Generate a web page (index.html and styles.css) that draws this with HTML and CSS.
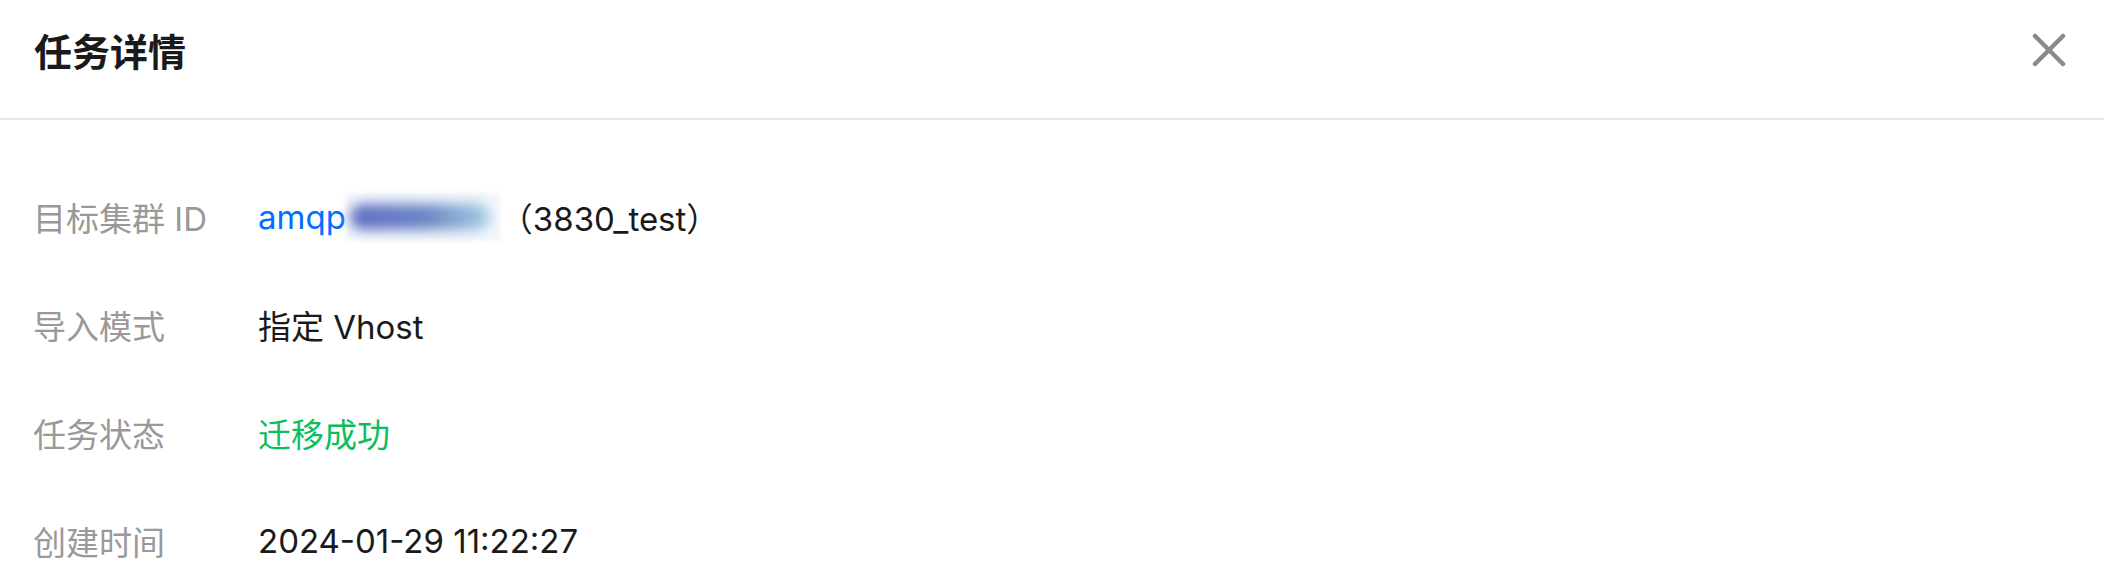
FILE: index.html
```html
<!DOCTYPE html>
<html lang="zh-CN">
<head>
  <meta charset="UTF-8" />
  <meta name="viewport" content="width=device-width, initial-scale=1.0" />
  <title>任务详情</title>
  <link rel="stylesheet" href="styles.css">
</head>
<body>
  <div class="dialog">
    <header class="dialog-header">
      <h2 class="dialog-title">任务详情</h2>
      <button class="dialog-close" aria-label="关闭">
        <svg width="34" height="34" viewBox="0 0 34 34">
          <path d="M3 3 L31 31 M31 3 L3 31" stroke="#8a8a8a" stroke-width="4.5" stroke-linecap="round" fill="none" />
        </svg>
      </button>
    </header>
    <main class="dialog-body">
      <dl class="info">
        <dt>目标集群 ID</dt>
        <dd>
          <a class="link" href="#">amqp</a><span class="mask"><span class="mask-bar"></span></span><span>（3830_test）</span>
        </dd>
        <dt>导入模式</dt>
        <dd>指定 Vhost</dd>
        <dt>任务状态</dt>
        <dd class="success">迁移成功</dd>
        <dt>创建时间</dt>
        <dd>2024-01-29 11:22:27</dd>
      </dl>
    </main>
  </div>
</body>
</html>
```

FILE: styles.css
```css
html, body {
  margin: 0;
  height: 100%;
  overflow: hidden;
}
body {
  font-family: Inter, "Noto Sans CJK SC", sans-serif;
  font-size: 33px;
  color: #1a1a1a;
  background: #fff;
}
.dialog {
  height: 100%;
}
.dialog-header {
  display: flex;
  align-items: center;
  justify-content: space-between;
  height: 52px;
  padding: 24px 38px 42px 34px;
  border-bottom: 2px solid #e6e8eb;
}
.dialog-title {
  margin: 0;
  font-family: "Noto Sans CJK SC", sans-serif;
  font-size: 38px;
  font-weight: 700;
  line-height: 52px;
  color: #1a1a1a;
}
.dialog-close {
  display: flex;
  padding: 0;
  border: none;
  background: none;
  cursor: pointer;
}
.dialog-body {
  padding: 43px 33px 0;
}
.info {
  display: grid;
  grid-template-columns: 225px 1fr;
  grid-auto-rows: 108px;
  align-items: center;
  margin: 0;
}
.info dt {
  color: #999;
}
.info dd {
  margin: 0;
  display: flex;
  align-items: center;
}
.link {
  color: #006eff;
  text-decoration: none;
}
.mask {
  position: relative;
  display: inline-block;
  width: 154px;
  height: 48px;
  background: #f2f6fb;
  filter: blur(2px);
}
.mask-bar {
  position: absolute;
  left: 4px;
  right: 10px;
  top: 11px;
  height: 26px;
  border-radius: 13px;
  background: linear-gradient(90deg, #5f6fc4, #6c85c4 55%, #a3d0e2);
  filter: blur(6px);
}
.success {
  color: #0abf5b;
}
```
